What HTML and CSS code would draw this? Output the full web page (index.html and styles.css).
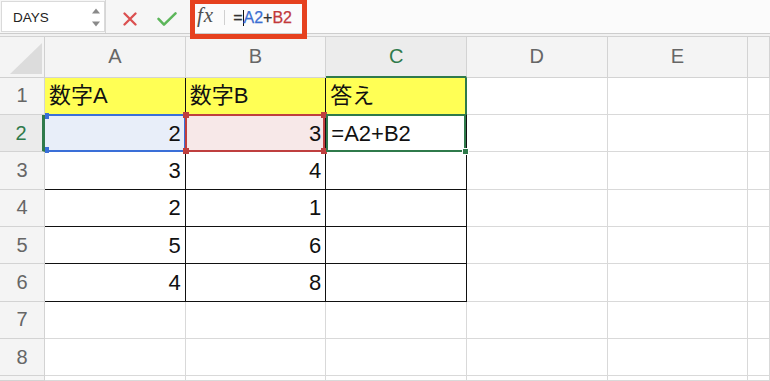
FILE: index.html
```html
<!DOCTYPE html>
<html lang="ja">
<head>
<meta charset="utf-8">
<title>Excel</title>
<link rel="stylesheet" href="styles.css">
</head>
<body>
<div class="app">
  <div class="toolbar">
    <div class="namebox">
      <span class="name">DAYS</span>
      <svg class="spin" width="8" height="19" viewBox="0 0 8 19"><path d="M0 5.5L4 0.5L8 5.5Z" fill="#8a8a8a"/><path d="M0 13.5L8 13.5L4 18.5Z" fill="#8a8a8a"/></svg>
    </div>
    <div class="tb-sep"></div>
    <div class="actions">
      <svg class="icon" width="14" height="14" viewBox="0 0 14 14"><path d="M1.5 1.5L12.5 12.5M12.5 1.5L1.5 12.5" stroke="#db5050" stroke-width="2.3" stroke-linecap="round"/></svg>
      <svg class="icon" width="20" height="14" viewBox="0 0 20 14"><path d="M1.5 6.8L7 12.6L18.5 1.4" stroke="#5cb65a" stroke-width="2.5" fill="none" stroke-linecap="round" stroke-linejoin="round"/></svg>
    </div>
    <div class="formula">
      <span class="fx">fx</span>
      <span class="fx-sep"></span>
      <span class="ftext">=<span class="caret"></span><span class="ref-a">A2</span>+<span class="ref-b">B2</span></span>
    </div>
    <div class="callout"></div>
  </div>
  <div class="divider"></div>
  <div class="sheet">
    <div class="corner"><svg width="44" height="39" viewBox="0 0 44 39"><polygon points="10,37 42,37 42,6" fill="#dcdcdc"/></svg></div>
    <div class="h">A</div>
    <div class="h">B</div>
    <div class="h h-sel">C</div>
    <div class="h">D</div>
    <div class="h">E</div>
    <div class="h"></div>

    <div class="r">1</div>
    <div class="c t y">数字A</div>
    <div class="c t y">数字B</div>
    <div class="c t y c1">答え</div>
    <div class="c"></div><div class="c"></div><div class="c"></div>

    <div class="r r-sel">2</div>
    <div class="c t num a2">2<div class="sel sel-a"><i class="sq sq-tl"></i><i class="sq sq-bl"></i></div></div>
    <div class="c t num b2">3<div class="sel sel-b"><i class="sq sq-tl"></i><i class="sq sq-bl"></i><i class="sq sq-tr"></i><i class="sq sq-br"></i></div></div>
    <div class="c t c2">=A2+B2<div class="sel sel-c"><i class="handle"></i></div></div>
    <div class="c"></div><div class="c"></div><div class="c"></div>

    <div class="r">3</div>
    <div class="c t num">3</div>
    <div class="c t num">4</div>
    <div class="c t"></div>
    <div class="c"></div><div class="c"></div><div class="c"></div>

    <div class="r">4</div>
    <div class="c t num">2</div>
    <div class="c t num">1</div>
    <div class="c t"></div>
    <div class="c"></div><div class="c"></div><div class="c"></div>

    <div class="r">5</div>
    <div class="c t num">5</div>
    <div class="c t num">6</div>
    <div class="c t"></div>
    <div class="c"></div><div class="c"></div><div class="c"></div>

    <div class="r">6</div>
    <div class="c t num">4</div>
    <div class="c t num">8</div>
    <div class="c t"></div>
    <div class="c"></div><div class="c"></div><div class="c"></div>

    <div class="r">7</div>
    <div class="c"></div><div class="c"></div><div class="c"></div>
    <div class="c"></div><div class="c"></div><div class="c"></div>

    <div class="r">8</div>
    <div class="c"></div><div class="c"></div><div class="c"></div>
    <div class="c"></div><div class="c"></div><div class="c"></div>

    <div class="r"></div>
    <div class="c"></div><div class="c"></div><div class="c"></div>
    <div class="c"></div><div class="c"></div><div class="c"></div>
  </div>
</div>
</body>
</html>
```

FILE: styles.css
```css
* { box-sizing: border-box; }
html, body { margin: 0; padding: 0; }
body {
  background: #ffffff;
  font-family: "Liberation Sans", "Noto Sans CJK JP", sans-serif;
  color: #1a1a1a;
  overflow: hidden;
}
.app {
  width: 770px;
  height: 381px;
  display: flex;
  flex-direction: column;
  overflow: hidden;
}

/* toolbar */
.toolbar {
  position: relative;
  height: 34px;
  flex: none;
  display: flex;
  align-items: stretch;
  background: #f6f6f6;
  border-bottom: 1px solid #cdcdcd;
}
.namebox {
  position: relative;
  width: 104px;
  margin: 1px 0 1px 1px;
  background: #ffffff;
  border: 1px solid #dadada;
  display: flex;
  align-items: center;
  padding-left: 11px;
}
.name {
  font-size: 13.5px;
  color: #222;
  padding-top: 1px;
}
.spin {
  position: absolute;
  left: 90px;
  top: 6px;
}
.tb-sep {
  width: 1px;
  background: #d6d6d6;
}
.actions {
  width: 84px;
  display: flex;
  align-items: center;
  padding: 4px 0 0 17px;
  gap: 20px;
}
.icon { display: block; }
.formula {
  flex: 1;
  display: flex;
  align-items: center;
  padding-left: 7px;
  background: #fbfbfb;
}
.fx {
  font-family: "Liberation Serif", serif;
  font-style: italic;
  font-size: 21px;
  line-height: 1;
  color: #505050;
  letter-spacing: 1px;
  padding-bottom: 2px;
}
.fx-sep {
  width: 1px;
  height: 15px;
  background: #d0d0d0;
  margin-left: 10px;
  margin-top: 2px;
}
.ftext {
  margin-left: 8px;
  font-size: 16px;
  line-height: 18px;
  color: #333;
  white-space: nowrap;
  padding-top: 3px;
  -webkit-text-stroke: 0.25px currentColor;
}
.caret {
  display: inline-block;
  width: 1px;
  height: 16px;
  background: #111;
  vertical-align: -3px;
}
.ref-a { color: #3a6ed2; }
.ref-b { color: #c2393a; }
.callout {
  position: absolute;
  left: 190px;
  top: -1px;
  width: 117px;
  height: 40px;
  border: 5px solid #e6411f;
  pointer-events: none;
  z-index: 5;
}
.divider {
  height: 3px;
  flex: none;
  background: #f1f1f1;
  border-bottom: 1px solid #d2d2d2;
}

/* sheet */
.sheet {
  flex: 1;
  display: grid;
  grid-template-columns: 45px repeat(5, 140.67px) 1fr;
  grid-template-rows: 40.67px repeat(8, 37.33px) 1fr;
  overflow: hidden;
}
.corner, .h, .r, .c {
  border-right: 1px solid #d9d9d9;
  border-bottom: 1px solid #d9d9d9;
  min-width: 0;
  min-height: 0;
}
.corner {
  background: #f4f4f4;
  border-color: #d0d0d0;
}
.corner svg { display: block; }
.h {
  background: #f4f4f4;
  border-color: #d3d3d3;
  display: flex;
  align-items: center;
  justify-content: center;
  font-size: 20px;
  color: #666;
}
.h-sel {
  background: #ececec;
  color: #2f7a4b;
  border-bottom: 2px solid #2f7a4b;
}
.r {
  background: #f4f4f4;
  border-color: #d3d3d3;
  display: flex;
  align-items: center;
  justify-content: center;
  font-size: 20px;
  color: #666;
}
.r-sel {
  background: #ebebeb;
  color: #2f7a4b;
  border-right: 3px solid #2f7a4b;
}
.c {
  position: relative;
  display: flex;
  align-items: center;
  padding: 1px 4px 0 4px;
  font-size: 22px;
  line-height: 1;
  color: #111;
  white-space: nowrap;
}
.t { border-color: #111; }
.y { background: #ffff55; }
.num { justify-content: flex-end; }
.c1 { border-right: 2px solid #2f7a4b; }
.a2 { background: #e8eef9; }
.b2 { background: #f7e8e8; }
.c2 { padding-left: 5px; }

/* selection overlays */
.sel {
  position: absolute;
  pointer-events: none;
}
.sel-a {
  top: -1px;
  bottom: -1px;
  left: 0;
  right: -1px;
  border: 2px solid #3a6fd8;
  border-left: none;
  z-index: 1;
}
.sel-b {
  top: -1px;
  bottom: -1px;
  left: -1px;
  right: 0;
  border: 2px solid #bf3f3f;
  z-index: 2;
}
.sel-c {
  top: -1px;
  bottom: -1px;
  left: 0;
  right: 0;
  border: 2px solid #2f7a4b;
  z-index: 2;
}
.sq {
  position: absolute;
  width: 6px;
  height: 6px;
}
.sel-a .sq { background: #3a6fd8; width: 4px; }
.sel-b .sq { background: #bf3f3f; }
.sel-a .sq-tl { top: -3px; left: 0; }
.sel-a .sq-bl { bottom: -3px; left: 0; }
.sel-b .sq-tl { top: -4px; left: -4px; }
.sel-b .sq-bl { bottom: -4px; left: -4px; }
.sel-b .sq-tr { top: -4px; right: -4px; }
.sel-b .sq-br { bottom: -4px; right: -4px; }
.handle {
  position: absolute;
  right: -5px;
  bottom: -5px;
  width: 7px;
  height: 7px;
  background: #2f7a4b;
  border: 1px solid #ffffff;
}
```
